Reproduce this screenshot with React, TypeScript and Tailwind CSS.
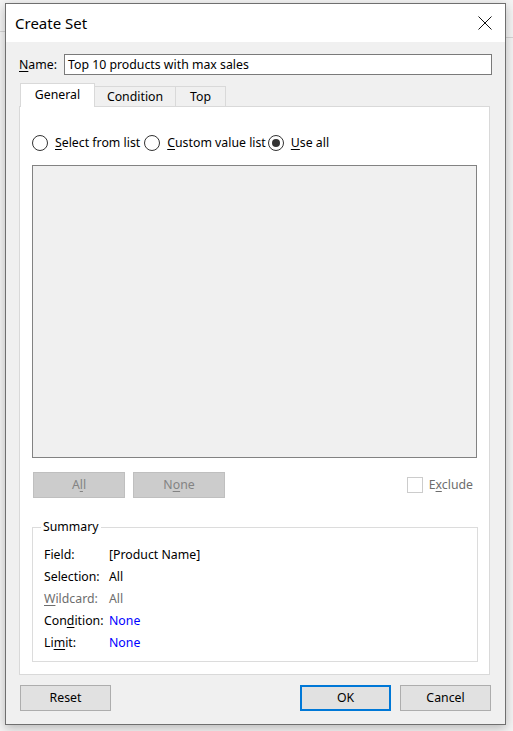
import React from "react";

function U({ children }: { children: React.ReactNode }) {
  return <span className="underline underline-offset-[2px] decoration-1">{children}</span>;
}

function Radio({ checked }: { checked?: boolean }) {
  return (
    <span className="w-[16px] h-[16px] shrink-0 rounded-full border border-[#333333] bg-white flex items-center justify-center">
      {checked && <span className="w-[8px] h-[8px] rounded-full bg-[#333333]" />}
    </span>
  );
}

function Row({ label, value, labelCls, valueCls }: { label: React.ReactNode; value: string; labelCls?: string; valueCls?: string }) {
  return (
    <div className="flex items-center h-[22px]">
      <div className={"w-[65px] " + (labelCls ?? "text-black")}>{label}</div>
      <div className={valueCls ?? "text-black"}>{value}</div>
    </div>
  );
}

export default function App() {
  return (
    <div className="relative w-[513px] h-[731px] overflow-hidden bg-[#f4f4f4] pl-[5px] pt-[3px] font-['Noto_Sans',sans-serif] text-[12.3px] text-black">
      <div className="absolute left-0 top-[31px] w-[5px] h-px bg-[#d4d4d4]" />
      <div className="absolute right-0 top-[37px] w-[8px] h-px bg-[#d4d4d4]" />
      <div className="relative w-[501px] h-[722px] border border-[#6f6f6f] bg-[#f0f0f0] shadow-[0_3px_10px_rgba(0,0,0,0.25)] flex flex-col">
        {/* title bar */}
        <div className="h-[38px] bg-white flex items-center justify-between pl-[9px] pr-[13px]">
          <span className="text-[15px] leading-none">Create Set</span>
          <svg width="14" height="14" viewBox="0 0 14 14" className="mt-[-1px]">
            <path d="M0.5 0.5 L13.5 13.5 M13.5 0.5 L0.5 13.5" stroke="#111" strokeWidth="1" fill="none" />
          </svg>
        </div>

        {/* body */}
        <div className="flex flex-col pl-[13px]">
          <div className="flex items-center mt-[12px] h-[21px]">
            <div className="w-[45px] pt-[1px]">
              <U>N</U>ame:
            </div>
            <div className="w-[428px] h-[21px] border border-[#7a7a7a] bg-white flex items-center pl-[3px] pt-[1px]">
              Top 10 products with max sales
            </div>
          </div>

          {/* tabs */}
          <div className="flex items-end ml-[1px] mt-[8px]">
            <div className="relative z-10 -mb-px w-[75px] h-[24px] bg-white border border-b-0 border-[#d9d9d9] flex items-center justify-center pb-[1px]">
              General
            </div>
            <div className="w-[81px] h-[20px] bg-[#f0f0f0] border border-l-0 border-b-0 border-[#d9d9d9] flex items-center justify-center pt-[1px]">
              Condition
            </div>
            <div className="w-[50px] h-[20px] bg-[#f0f0f0] border border-l-0 border-b-0 border-[#d9d9d9] flex items-center justify-center pt-[1px]">
              Top
            </div>
          </div>

          {/* panel */}
          <div className="w-[471px] h-[569px] bg-white border border-[#d9d9d9] px-[12px] pt-[28px] flex flex-col">
            <div className="flex items-center h-[16px]">
              <Radio />
              <span className="ml-[7px]">
                <U>S</U>elect from list
              </span>
              <span className="ml-[4px]">
                <Radio />
              </span>
              <span className="ml-[7px]">
                <U>C</U>ustom value list
              </span>
              <span className="ml-[2px]">
                <Radio checked />
              </span>
              <span className="ml-[7px]">
                <U>U</U>se all
              </span>
            </div>

            <div className="mt-[14px] w-[445px] h-[293px] bg-[#f0f0f0] border border-[#828282]" />

            <div className="mt-[14px] flex items-center h-[26px]">
              <div className="ml-[1px] w-[92px] h-[26px] bg-[#cccccc] border border-[#bfbfbf] flex items-center justify-center text-[#838383]">
                A<U>l</U>l
              </div>
              <div className="ml-[8px] w-[92px] h-[26px] bg-[#cccccc] border border-[#bfbfbf] flex items-center justify-center text-[#838383]">
                N<U>o</U>ne
              </div>
              <div className="ml-auto mr-[4px] flex items-center">
                <span className="w-[16px] h-[16px] border border-[#cccccc] bg-white" />
                <span className="ml-[6px] text-[#6d6d6d]">
                  E<U>x</U>clude
                </span>
              </div>
            </div>

            {/* summary */}
            <div className="relative mt-[29px] w-[446px] h-[135px] border border-[#dcdcdc] pl-[11px] pt-[16px]">
              <span className="absolute left-[8px] top-[-10px] bg-white px-[2px] leading-[18px]">Summary</span>
              <Row label="Field:" value="[Product Name]" />
              <Row label="Selection:" value="All" />
              <Row
                label={
                  <>
                    <U>W</U>ildcard:
                  </>
                }
                value="All"
                labelCls="text-[#6d6d6d]"
                valueCls="text-[#6d6d6d]"
              />
              <Row
                label={
                  <>
                    Con<U>d</U>ition:
                  </>
                }
                value="None"
                valueCls="text-[#0000ff]"
              />
              <Row
                label={
                  <>
                    Li<U>m</U>it:
                  </>
                }
                value="None"
                valueCls="text-[#0000ff]"
              />
            </div>
          </div>

          {/* bottom buttons */}
          <div className="mt-[10px] flex items-center h-[26px] ml-[1px]">
            <div className="w-[91px] h-[26px] bg-[#e1e1e1] border border-[#adadad] flex items-center justify-center">Reset</div>
            <div className="ml-[189px] w-[91px] h-[26px] bg-[#e1e1e1] border-2 border-[#0078d7] flex items-center justify-center">OK</div>
            <div className="ml-[9px] w-[91px] h-[26px] bg-[#e1e1e1] border border-[#adadad] flex items-center justify-center">Cancel</div>
          </div>
        </div>
      </div>
    </div>
  );
}
